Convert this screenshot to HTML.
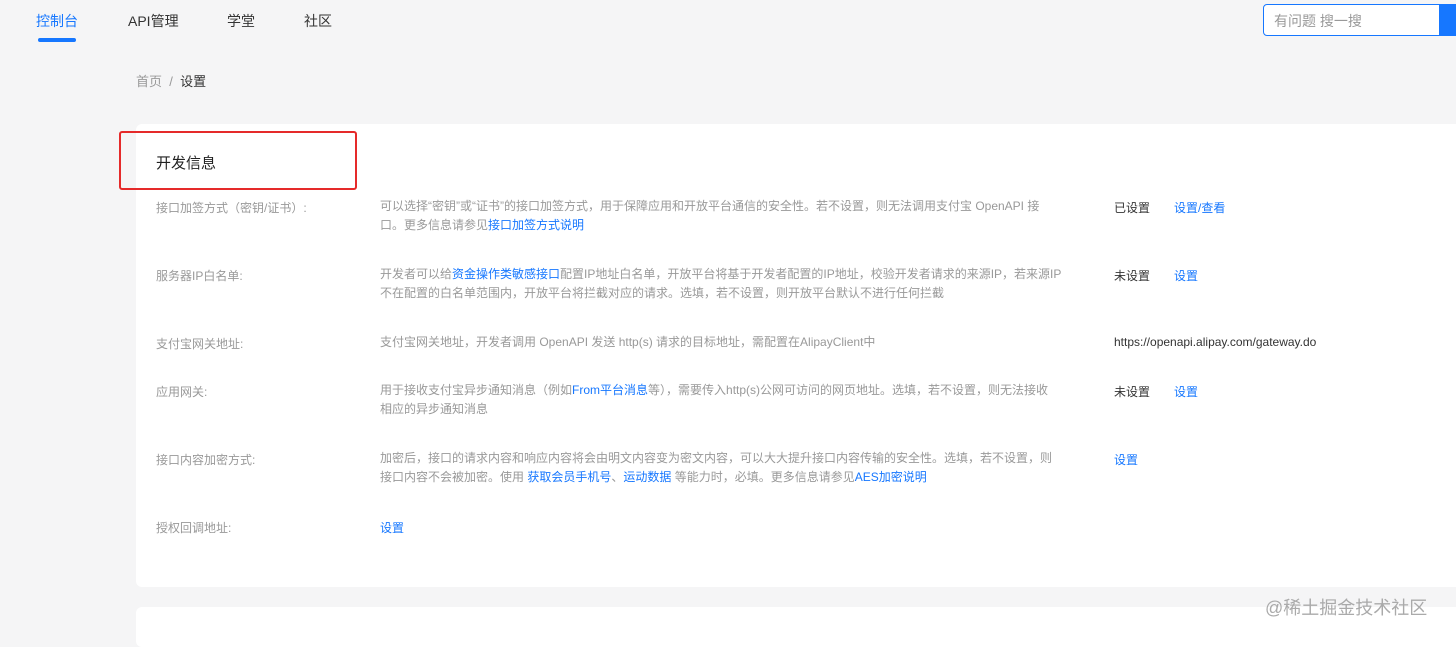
<!DOCTYPE html>
<html><head><meta charset="utf-8"><style>
*{margin:0;padding:0;box-sizing:border-box}
body{width:1456px;height:635px;overflow:hidden;background:#f5f5f6;font-family:"Liberation Sans","Noto Sans CJK SC",sans-serif;position:relative;color:#333}
.a{position:absolute;white-space:nowrap}
.nav{font-size:14px;top:11px}
.card{position:absolute;left:136px;top:124px;width:1330px;height:463px;background:#fff;border-radius:6px}
.card2{position:absolute;left:136px;top:607px;width:1330px;height:40px;background:#fff;border-radius:6px}
.lbl{font-size:12px;color:#999;left:156px}
.desc{font-size:12px;color:#999;left:380px;line-height:19px}
.st{font-size:12px;color:#333;left:1114px}
.lk{color:#1677ff}
.ac{font-size:12px;color:#1677ff;left:1174px}
</style></head><body>
<div class="a nav" style="left:36px;color:#1677ff">控制台</div>
<div class="a" style="left:38px;top:38px;width:38px;height:4px;border-radius:2px;background:#1677ff"></div>
<div class="a nav" style="left:128px;color:#333">API管理</div>
<div class="a nav" style="left:227px;color:#333">学堂</div>
<div class="a nav" style="left:304px;color:#333">社区</div>
<div class="a" style="left:1263px;top:4px;width:177px;height:32px;border:1px solid #1677ff;border-radius:4px 0 0 4px;background:#fff;font-size:14px;color:#999;padding:6px 10px">有问题 搜一搜</div>
<div class="a" style="left:1439px;top:4px;width:17px;height:32px;background:#1677ff"></div>
<div class="a" style="left:136px;top:71px;font-size:13px;color:#999">首页 &nbsp;/ &nbsp;<span style="color:#333">设置</span></div>
<div class="card"></div>
<div class="card2"></div>
<div class="a" style="left:119px;top:131px;width:238px;height:59px;border:2px solid #e52a2a;border-radius:3px"></div>
<div class="a" style="left:156px;top:152px;font-size:15px;color:#222">开发信息</div>

<div class="a lbl" style="top:199px">接口加签方式（密钥/证书）:</div>
<div class="a desc" style="top:197px">可以选择“密钥”或“证书”的接口加签方式，用于保障应用和开放平台通信的安全性。若不设置，则无法调用支付宝 OpenAPI 接<br>口。更多信息请参见<span class="lk">接口加签方式说明</span></div>
<div class="a st" style="top:199px">已设置</div><div class="a ac" style="top:199px">设置/查看</div>

<div class="a lbl" style="top:267px">服务器IP白名单:</div>
<div class="a desc" style="top:265px">开发者可以给<span class="lk">资金操作类敏感接口</span>配置IP地址白名单，开放平台将基于开发者配置的IP地址，校验开发者请求的来源IP，若来源IP<br>不在配置的白名单范围内，开放平台将拦截对应的请求。选填，若不设置，则开放平台默认不进行任何拦截</div>
<div class="a st" style="top:267px">未设置</div><div class="a ac" style="top:267px">设置</div>

<div class="a lbl" style="top:335px">支付宝网关地址:</div>
<div class="a desc" style="top:333px">支付宝网关地址，开发者调用 OpenAPI 发送 http(s) 请求的目标地址，需配置在AlipayClient中</div>
<div class="a st" style="top:335px">https://openapi.alipay.com/gateway.do</div>

<div class="a lbl" style="top:383px">应用网关:</div>
<div class="a desc" style="top:381px">用于接收支付宝异步通知消息（例如<span class="lk">From平台消息</span>等），需要传入http(s)公网可访问的网页地址。选填，若不设置，则无法接收<br>相应的异步通知消息</div>
<div class="a st" style="top:383px">未设置</div><div class="a ac" style="top:383px">设置</div>

<div class="a lbl" style="top:451px">接口内容加密方式:</div>
<div class="a desc" style="top:449px">加密后，接口的请求内容和响应内容将会由明文内容变为密文内容，可以大大提升接口内容传输的安全性。选填，若不设置，则<br>接口内容不会被加密。使用 <span class="lk">获取会员手机号</span>、<span class="lk">运动数据</span> 等能力时，必填。更多信息请参见<span class="lk">AES加密说明</span></div>
<div class="a ac" style="top:451px;left:1114px">设置</div>

<div class="a lbl" style="top:519px">授权回调地址:</div>
<div class="a" style="top:519px;left:380px;font-size:12px;color:#1677ff">设置</div>

<div class="a" style="left:1265px;top:594px;font-size:18px;color:#aaa">@稀土掘金技术社区</div>
</body></html>
